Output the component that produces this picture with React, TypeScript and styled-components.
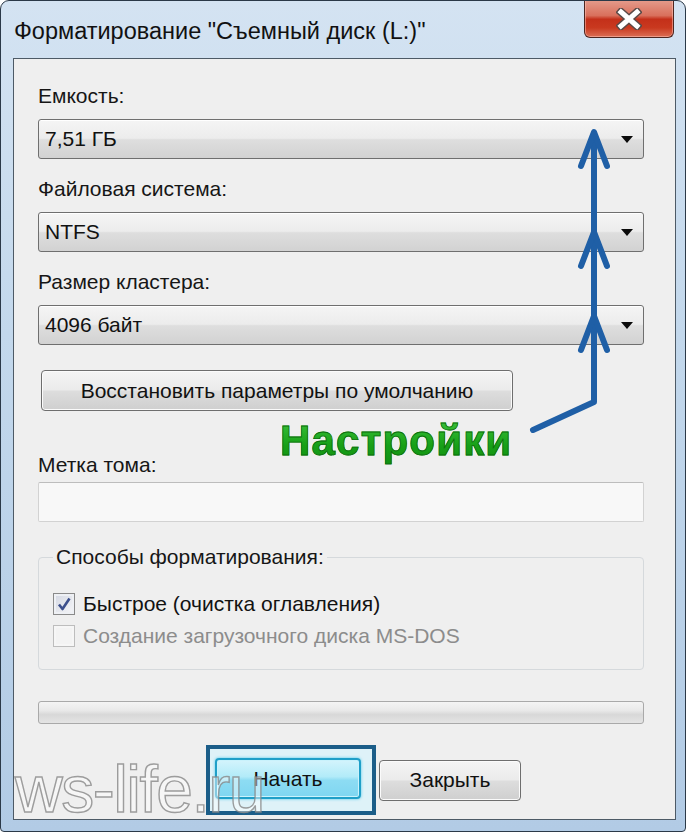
import React from 'react'
import styled, { createGlobalStyle } from 'styled-components'

const GlobalStyle = createGlobalStyle`
  html, body {
    margin: 0;
    padding: 0;
    background: #ffffff;
  }
  body {
    font-family: "Liberation Sans", Arial, sans-serif;
  }
`

const Window = styled.div`
  position: relative;
  box-sizing: border-box;
  width: 686px;
  height: 832px;
  border: 1px solid #2b3948;
  border-radius: 9px 9px 4px 4px;
  background: linear-gradient(180deg, #d4e3f2 0%, #c3d8ec 40%, #b2cbe5 100%);
  display: flex;
  flex-direction: column;
  overflow: hidden;
  font-family: "Liberation Sans", Arial, sans-serif;
`

const TitleBar = styled.div`
  height: 57px;
  display: flex;
  align-items: flex-start;
`

const Title = styled.div`
  margin: 17px 0 0 13px;
  font-size: 23.5px;
  line-height: 26px;
  color: #111;
`

const CloseButton = styled.div`
  margin: -1px 11px 0 auto;
  width: 90px;
  height: 38px;
  box-sizing: border-box;
  border: 1px solid #4e2620;
  border-top: none;
  border-radius: 0 0 6px 6px;
  background: linear-gradient(180deg, #e59c8c 0%, #d9705c 42%, #c4301a 52%, #c9391f 75%, #dc6f55 100%);
  box-shadow: inset 0 0 0 1px rgba(255, 200, 190, 0.5);
  display: flex;
  align-items: center;
  justify-content: center;
`

const Client = styled.div`
  flex: 1;
  margin: 0 9px 11px 12px;
  border: 1px solid #4d5a66;
  background: #efefef;
  padding: 0 31px 0 24px;
  display: flex;
  flex-direction: column;
`

const Label = styled.div<{ $top: number; $gap?: number }>`
  margin-top: ${p => p.$top}px;
  margin-bottom: ${p => p.$gap ?? 11}px;
  font-size: 21px;
  line-height: 24px;
  color: #161616;
`

const Combo = styled.div`
  height: 40px;
  box-sizing: border-box;
  border: 1px solid #6f6f6f;
  border-radius: 3px;
  background: linear-gradient(180deg, #f5f5f5 0%, #ececec 48%, #dedede 52%, #d2d2d2 100%);
  box-shadow: inset 0 1px 0 #ffffff;
  display: flex;
  align-items: center;
  padding: 0 10px 0 6px;
  font-size: 21px;
  color: #111;
`

const ComboText = styled.span`
  flex: 1;
`

const ComboArrow = styled.span`
  width: 0;
  height: 0;
  border-left: 6px solid transparent;
  border-right: 6px solid transparent;
  border-top: 7px solid #0b0b0b;
`

const PushButton = styled.div<{ $width: number }>`
  width: ${p => p.$width}px;
  height: 41px;
  box-sizing: border-box;
  border: 1px solid #6e6e6e;
  border-radius: 4px;
  background: linear-gradient(180deg, #f4f4f4 0%, #ebebeb 48%, #dddddd 52%, #cfcfcf 100%);
  box-shadow: inset 0 0 0 1px #fbfbfb;
  display: flex;
  align-items: center;
  justify-content: center;
  font-size: 21px;
  color: #111;
`

const ResetButton = styled(PushButton)`
  margin: 25px 0 0 3px;
`

const TextInput = styled.div`
  height: 40px;
  box-sizing: border-box;
  border: 1px solid #d2d2d2;
  border-top-color: #bdbdbd;
  border-radius: 2px;
  background: #f8f8f8;
`

const Group = styled.fieldset`
  margin: 23px 0 0;
  padding: 0 14px 22px;
  border: 1px solid #d5d9dc;
  border-radius: 4px;
  display: flex;
  flex-direction: column;
  gap: 10px;
`

const Legend = styled.legend`
  padding: 0 3px;
  font-size: 21px;
  line-height: 24px;
  color: #161616;
  margin-bottom: 24px;
`

const CheckRow = styled.div<{ $disabled?: boolean }>`
  display: flex;
  align-items: center;
  gap: 8px;
  height: 22px;
  font-size: 21px;
  color: ${p => (p.$disabled ? '#8c8c8c' : '#121212')};
`

const Box = styled.span<{ $disabled?: boolean }>`
  width: 22px;
  height: 22px;
  box-sizing: border-box;
  border: 1px solid ${p => (p.$disabled ? '#bdbdbd' : '#8a8a8a')};
  background: ${p => (p.$disabled ? '#f3f3f3' : 'linear-gradient(135deg, #d3d7e2 0%, #f6f6f8 100%)')};
  box-shadow: inset 0 0 0 2px ${p => (p.$disabled ? '#f6f6f6' : '#eef0f4')};
  display: flex;
  align-items: center;
  justify-content: center;
`

const Progress = styled.div`
  margin-top: 31px;
  height: 23px;
  box-sizing: border-box;
  border: 1px solid #a9a9a9;
  border-radius: 3px;
  background: linear-gradient(180deg, #f4f4f4 0%, #e9e9e9 40%, #d8d8d8 60%, #e4e4e4 100%);
`

const ButtonRow = styled.div`
  margin: 21px 0 0 168px;
  display: flex;
  align-items: center;
  gap: 3px;
`

const Highlight = styled.div`
  width: 170px;
  height: 70px;
  box-sizing: border-box;
  border: 4px solid #1b5d88;
  background: #def2f8;
  padding: 9px 0 0 5px;
`

const StartButton = styled(PushButton)`
  border: 2px solid #1f9fc8;
  background: linear-gradient(180deg, #d4f4fc 0%, #b2ebf9 45%, #8ddcf3 55%, #7fd6f1 100%);
  box-shadow: 0 0 3px #4cc8ea, inset 0 0 0 1px #c9f2fc;
`

const Note = styled.div`
  position: absolute;
  left: 279px;
  top: 417px;
  font-size: 42px;
  line-height: 46px;
  font-weight: bold;
  letter-spacing: 1.2px;
  color: #1ea51e;
  background: linear-gradient(180deg, #3cc43c 0%, #17a017 60%, #119011 100%);
  -webkit-background-clip: text;
  background-clip: text;
  -webkit-text-fill-color: transparent;
  -webkit-text-stroke: 0.8px #0e6f0e;
`

const Watermark = styled.div`
  position: absolute;
  left: 14px;
  top: 782px;
  font-size: 66px;
  line-height: 12px;
  letter-spacing: -1.5px;
  color: rgba(255, 255, 255, 0.45);
  -webkit-text-stroke: 1.4px rgba(135, 135, 135, 0.8);
  pointer-events: none;
`

const ArrowLayer = styled.svg`
  position: absolute;
  left: -1px;
  top: -1px;
  pointer-events: none;
`

const Check = () => (
  <svg width="16" height="16" viewBox="0 0 16 16">
    <path d="M3 8.5 L6.5 13 L13.5 2.5" fill="none" stroke="#3c4f8c" strokeWidth="2.6" strokeLinejoin="round" />
  </svg>
)

const CloseGlyph = () => (
  <svg width="26" height="22" viewBox="0 0 26 22">
    <path d="M5 4 L21 18 M21 4 L5 18" stroke="#5b4a47" strokeWidth="8" strokeLinecap="square" />
    <path d="M5 4 L21 18 M21 4 L5 18" stroke="#ffffff" strokeWidth="5" strokeLinecap="square" />
  </svg>
)

const heads = [132, 232, 316]

const fields = [
  { label: 'Емкость:', value: '7,51 ГБ', top: 25 },
  { label: 'Файловая система:', value: 'NTFS', top: 18 },
  { label: 'Размер кластера:', value: '4096 байт', top: 18 },
]

export default function App() {
  return (
    <>
      <GlobalStyle />
      <Window>
        <TitleBar>
          <Title>Форматирование "Съемный диск (L:)"</Title>
          <CloseButton>
            <CloseGlyph />
          </CloseButton>
        </TitleBar>
        <Client>
          {fields.map(f => (
            <React.Fragment key={f.label}>
              <Label $top={f.top}>{f.label}</Label>
              <Combo>
                <ComboText>{f.value}</ComboText>
                <ComboArrow />
              </Combo>
            </React.Fragment>
          ))}
          <ResetButton $width={472}>Восстановить параметры по умолчанию</ResetButton>
          <Label $top={42} $gap={5}>Метка тома:</Label>
          <TextInput />
          <Group>
            <Legend>Способы форматирования:</Legend>
            <CheckRow>
              <Box>
                <Check />
              </Box>
              Быстрое (очистка оглавления)
            </CheckRow>
            <CheckRow $disabled>
              <Box $disabled />
              Создание загрузочного диска MS-DOS
            </CheckRow>
          </Group>
          <Progress />
          <ButtonRow>
            <Highlight>
              <StartButton $width={146}>Начать</StartButton>
            </Highlight>
            <PushButton $width={142}>Закрыть</PushButton>
          </ButtonRow>
        </Client>
        <Note>Настройки</Note>
        <Watermark>ws-life.ru</Watermark>
        <ArrowLayer width="686" height="832" viewBox="0 0 686 832">
          <g fill="none" stroke="#1f5fa6" strokeWidth="6" strokeLinecap="round" strokeLinejoin="round">
            <polyline points="533,430 594,402 594,134" />
            {heads.map(y => (
              <polyline key={y} points={`581,${y + 34} 594,${y} 607,${y + 34}`} />
            ))}
          </g>
        </ArrowLayer>
      </Window>
    </>
  )
}
